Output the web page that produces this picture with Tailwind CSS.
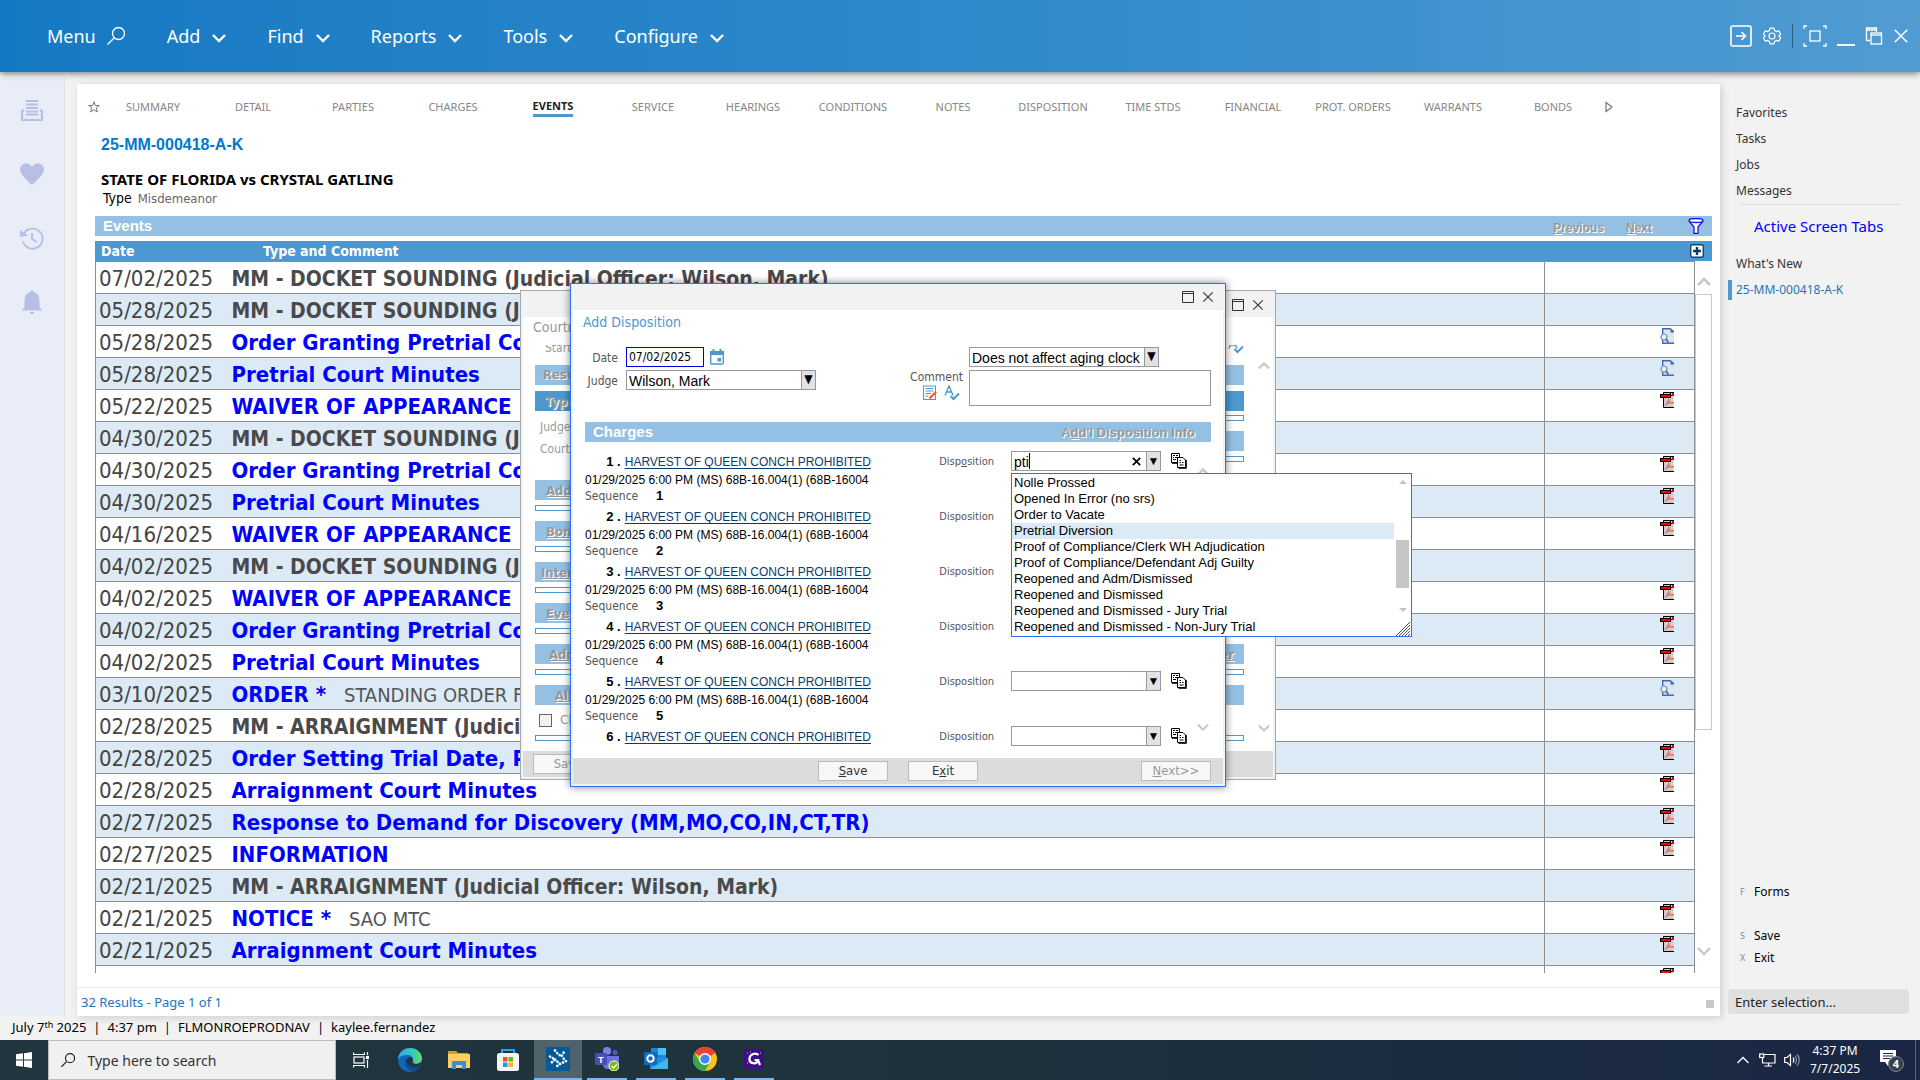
<!DOCTYPE html>
<html lang="en">
<head>
    <meta charset="UTF-8">
    <meta name="viewport" content="width=device-width, initial-scale=1.0">
    <title>25-MM-000418-A-K | Events</title>
    <script src="https://cdn.jsdelivr.net/npm/@tailwindcss/browser@4"></script>
</head>
<body class="h-screen overflow-hidden flex flex-col bg-[#f2f2f2] font-['Noto_Sans',sans-serif] text-black">

    <!-- Shared icons -->
    <svg class="hidden" aria-hidden="true">
        <symbol id="i-chev" viewBox="0 0 14 10"><path d="M1 2 L7 8 L13 2" fill="none" stroke="currentColor" stroke-width="2.4"/></symbol>
        <symbol id="i-chev-up" viewBox="0 0 14 10"><path d="M1 8 L7 2 L13 8" fill="none" stroke="currentColor" stroke-width="2.6"/></symbol>
        <symbol id="i-close" viewBox="0 0 14 14"><path d="M1.500 1.500 L12.500 12.500 M12.500 1.500 L1.500 12.500" fill="none" stroke="currentColor" stroke-width="1.300"/></symbol>
        <symbol id="i-max" viewBox="0 0 12 12"><path d="M.5 .5 H11.500 V11.500 H.5 Z M.5 2.500 H11.500" fill="none" stroke="currentColor"/></symbol>
        <symbol id="i-pdf" viewBox="0 0 14 16">
            <path d="M3.500 .5 H13.500 V15.500 H3.500 Z" fill="#ccc"/>
            <path d="M14 15.500 H3.500 V.5 H14 M10.500 1 V3.500 H14" fill="none" stroke="#000"/>
            <rect x="12" y="1" width="2" height="3" fill="#e00"/>
            <rect x=".5" y="2.500" width="10" height="3" fill="#f00" stroke="#000"/>
            <path d="M5 13.500 C7 12 9 8 8.500 6.500 M8.500 8 C9 10 11 11.500 14 11 M6 12.500 C8 11 11 10.300 14 10.800" fill="none" stroke="#f76b60" stroke-width="1.200"/>
        </symbol>
        <symbol id="i-doc" viewBox="0 0 14 16">
            <path d="M3 1 H11 L14 4 V15 H3 Z" fill="#dfe4f2"/>
            <path d="M2.700 6 V.7 H11 M5 15.300 H14 M2.700 12 V15.300 H5" fill="none" stroke="#3f6ca8" stroke-width="1.400"/>
            <path d="M10.500 0 L14 3 V4.500 H10.500 Z" fill="#3f6ca8"/>
            <circle cx="4" cy="9" r="3" fill="#e6f0f7" stroke="#6d8fae" stroke-width="1.200"/>
            <path d="M6 11.300 L8.500 14.500" stroke="#3f6ca8" stroke-width="1.800"/>
        </symbol>
        <symbol id="i-copy" viewBox="0 0 16 16">
            <path d="M.5 .5 H8.500 V9.500 H.5 Z" fill="#fff" stroke="#000"/>
            <path d="M2 2.500 H4 M5 2.500 H7 M2 4.500 H3 M4 4.500 H7 M2 6.500 H5" stroke="#000"/>
            <path d="M6.500 4.500 H12 L14.500 7 V14.500 H6.500 Z" fill="#fff" stroke="#000"/>
            <path d="M8.500 7.500 H10 M11 9.500 H12.500 M8.500 9.500 H10 M8.500 12 H12.500" fill="none" stroke="#000"/>
            <path d="M15.500 7 V15.500 H7.500 M1 10.500 H6" fill="none" stroke="#333"/>
        </symbol>
        <symbol id="i-spell" viewBox="0 0 16 16">
            <path d="M1 10.500 L5 .8 L9 10.500 M2.500 7 H7.500" fill="none" stroke="#4d99cf" stroke-width="1.400"/>
            <path d="M6.500 11 L9.500 14 L15 8.500" fill="none" stroke="#4d99cf" stroke-width="2"/>
        </symbol>
    </svg>

    <!-- Top menu -->
    <header class="relative z-10 h-[72px] shrink-0 flex items-center justify-between pl-[47px] pr-[11px] bg-linear-to-r from-[#1479c4] via-[#2f89ca] to-[#509bd2] text-white shadow-[0_2px_6px_rgba(0,0,0,0.45)]">
        <nav class="flex items-center gap-[41px] text-[18px] leading-6">
            <button class="flex items-center gap-2.5">Menu
                <svg class="size-5" viewBox="0 0 20 20" fill="none" stroke="currentColor" stroke-width="1.300"><circle cx="12.500" cy="7.500" r="6"/><path d="M8.300 11.800 L1.500 18.500"/></svg>
            </button>
            <button class="flex items-center gap-3">Add <svg class="w-3.5 h-2.5 mt-1"><use href="#i-chev"/></svg></button>
            <button class="flex items-center gap-3">Find <svg class="w-3.5 h-2.5 mt-1"><use href="#i-chev"/></svg></button>
            <button class="flex items-center gap-3">Reports <svg class="w-3.5 h-2.5 mt-1"><use href="#i-chev"/></svg></button>
            <button class="flex items-center gap-3">Tools <svg class="w-3.5 h-2.5 mt-1"><use href="#i-chev"/></svg></button>
            <button class="flex items-center gap-3">Configure <svg class="w-3.5 h-2.5 mt-1"><use href="#i-chev"/></svg></button>
        </nav>
        <div class="flex items-center gap-2.5">
            <button aria-label="Open"><svg class="size-[22px]" viewBox="0 0 22 22" fill="none" stroke="currentColor" stroke-width="1.600"><rect x="1" y="1" width="20" height="20" rx="1.500"/><path d="M6 11 H15 M11.500 7 L15.500 11 L11.500 15"/></svg></button>
            <button aria-label="Settings"><svg class="size-5" viewBox="0 0 24 24" fill="none" stroke="currentColor" stroke-width="1.400" stroke-linejoin="round"><path d="M9.700 2.500 h4.600 l.8 3 2 1.200 3-.9 2.300 4 -2.200 2.200 v0 l2.200 2.200 -2.300 4 -3-.9 -2 1.200 -.8 3 H9.700 l-.8-3 -2-1.200 -3 .9 -2.300-4 2.200-2.200 -2.200-2.200 2.300-4 3 .9 2-1.200 z"/><circle cx="12" cy="12" r="3.600"/></svg></button>
            <span class="w-px h-6 bg-[#2a5f8c]"></span>
            <button aria-label="Full screen"><svg class="size-6" viewBox="0 0 24 24" fill="none" stroke="currentColor" stroke-width="1.300"><rect x="7" y="7" width="10" height="10"/><path d="M1 5 V2 H4 M20 2 H23 V5 M23 19 V22 H20 M4 22 H1 V19"/></svg></button>
            <button aria-label="Minimize" class="h-5 w-[18px] flex items-end"><span class="block w-full h-0.5 bg-white"></span></button>
            <button aria-label="Restore"><svg class="size-[18px]" viewBox="0 0 18 18" fill="none" stroke="currentColor" stroke-width="1.300"><path d="M5 13.500 H1.500 V1 H11.500 V5 M1.500 3 H11.500"/><rect x="6" y="6" width="10.500" height="11"/><path d="M6 8 H16"/></svg></button>
            <button aria-label="Close"><svg class="size-4"><use href="#i-close"/></svg></button>
        </div>
    </header>

    <div class="flex-1 min-h-0 flex">

        <!-- Left rail -->
        <aside class="w-[65px] shrink-0 mt-1.5 pt-5 flex flex-col items-center gap-10 bg-[#e9edf8] border-r border-[#dcdfe4] text-[#b7bfe6]">
            <button aria-label="Print"><svg class="size-6" viewBox="0 0 24 24" fill="none" stroke="currentColor"><path d="M6 3 H18 M6 6.500 H18 M6 10 H18 M6 13.500 H18 M6 16.500 H18" stroke-width="1.800"/><path d="M4.500 12.500 H2 V22 H22 V12.500 H19.500" stroke-width="2.200" stroke-linejoin="round"/></svg></button>
            <button aria-label="Favorites"><svg class="size-6" viewBox="0 0 24 24" fill="currentColor"><path d="M12 23 C8 19 0 13 0 7.500 C0 3.500 3 1.500 6 1.500 C9 1.500 11 3 12 5 C13 3 15 1.500 18 1.500 C21 1.500 24 3.500 24 7.500 C24 13 16 19 12 23 Z"/></svg></button>
            <button aria-label="History"><svg class="size-6" viewBox="0 0 24 24" fill="none" stroke="currentColor" stroke-width="1.900"><path d="M3.500 8.500 A10 10 0 1 1 3 15.500"/><path d="M0 4 L0 11 L8 9.500 Z" fill="currentColor" stroke="none"/><path d="M12 7 V13 L16.500 16"/></svg></button>
            <button aria-label="Notifications"><svg class="size-6" viewBox="0 0 24 24" fill="currentColor"><path d="M12 0 C13 0 13.500 1 13.500 2 C18 3 19.500 6.500 19.500 11 V17 L22.500 20.500 H1.500 L4.500 17 V11 C4.500 6.500 6 3 10.500 2 C10.500 1 11 0 12 0 Z M10 22 H14 C14 24.500 10 24.500 10 22 Z"/></svg></button>
        </aside>

        <!-- Case card -->
        <main class="flex-1 min-w-0 mt-3 ml-3 flex flex-col bg-white shadow-[2px_2px_8px_rgba(0,0,0,0.15)]">
            <nav id="tabs" class="h-[46px] shrink-0 pl-2 flex items-center text-[11px] leading-4 text-[#868686]"></nav>

            <div class="pl-6 h-[86px] shrink-0 pt-[5px]">
                <h1 class="font-['Liberation_Sans',sans-serif] font-bold text-[16px] leading-5 text-[#0078d0]">25-MM-000418-A-K</h1>
                <p class="mt-3.5 font-bold text-[15px] leading-5">STATE OF FLORIDA vs CRYSTAL GATLING</p>
                <p class="pl-0.5 text-[14px] leading-[18px] font-['DejaVu_Sans_Condensed','DejaVu_Sans',sans-serif]">Type <span class="ml-0.5 text-[13px] text-[#666]">Misdemeanor</span></p>
            </div>

            <section class="flex-1 min-h-0 mx-2 ml-[18px] flex flex-col">
                <div class="h-5 shrink-0 px-2 flex items-center bg-[#94c0e3] font-['Liberation_Sans',sans-serif] font-bold">
                    <h2 class="flex-1 text-[15px] leading-5 text-white">Events</h2>
                    <button disabled class="pt-1 text-[12px] leading-4 text-[#999] [text-shadow:1px_1px_0_#fff] mr-[22px]"><u>P</u>revious</button>
                    <button disabled class="pt-1 text-[12px] leading-4 text-[#999] [text-shadow:1px_1px_0_#fff] mr-9"><u>N</u>ext</button>
                    <button aria-label="Filter"><svg class="size-4" viewBox="0 0 16 16" fill="#fff" stroke="#1414e0" stroke-width="1.300"><path d="M1 3 L6 9 V15.300 H10 V9 L15 3"/><ellipse cx="8" cy="2.500" rx="7" ry="2"/></svg></button>
                </div>
                <div class="mt-[5px] h-5 shrink-0 pl-1.5 pr-2 flex items-center bg-[#4d99cf] text-white font-bold text-[14px] leading-5 font-['DejaVu_Sans_Condensed','DejaVu_Sans',sans-serif]">
                    <span class="w-[162px]">Date</span>
                    <span class="flex-1">Type and Comment</span>
                    <button aria-label="Add event"><svg class="size-3.5" viewBox="0 0 14 14"><rect x=".7" y=".7" width="12.600" height="12.600" rx="2" fill="#fff" stroke="#10456f" stroke-width="1.400"/><path d="M7 3 V11 M3 7 H11" stroke="#0b3c66" stroke-width="2.400"/></svg></button>
                </div>
                <div class="flex-1 min-h-0 mb-3.5 flex overflow-hidden">
                    <div class="flex-1 min-w-0 overflow-hidden">
                        <table class="w-full table-fixed border-collapse font-['DejaVu_Sans_Condensed','DejaVu_Sans',sans-serif]">
                            <colgroup><col class="w-[132px]"><col><col class="w-[150px]"></colgroup>
                            <tbody id="events"></tbody>
                        </table>
                    </div>
                    <div class="w-[17px] shrink-0 flex flex-col items-center text-[#c8c8c8]">
                        <svg class="w-3.5 h-2.5 mt-4 mb-[7px]"><use href="#i-chev-up"/></svg>
                        <div class="w-full h-[436px] border border-[#c8c8c8]"></div>
                        <svg class="w-3.5 h-2.5 mt-auto mb-[17px]"><use href="#i-chev"/></svg>
                    </div>
                </div>
            </section>

            <footer class="h-[29px] shrink-0 pl-1 pr-1.5 flex items-center justify-between border-t border-[#ececec] text-[13px] leading-5 text-[#1e73be]">
                <span>32 Results - Page 1 of 1</span>
                <span class="size-2 mt-1 bg-[#c8c8c8]"></span>
            </footer>
        </main>

        <!-- Right panel -->
        <aside class="w-[200px] shrink-0 pt-[31px] pl-4 pr-[11px] flex flex-col text-[12px] text-[#333]">
            <a href="#" class="leading-5 mb-1.5">Favorites</a>
            <a href="#" class="leading-5 mb-1.5">Tasks</a>
            <a href="#" class="leading-5 mb-1.5">Jobs</a>
            <a href="#" class="leading-5">Messages</a>
            <hr class="mt-[3px] ml-1 mr-2 border-[#dcdcdc]">
            <a href="#" class="mt-[11px] pl-[18px] text-[15px] leading-5 text-[#0000ff]">Active Screen Tabs</a>
            <a href="#" class="mt-[18px] leading-5">What's New</a>
            <a href="#" class="mt-1.5 -ml-2 pl-1 border-l-4 border-[#4d99cf] leading-5 text-[#1e73be]">25-MM-000418-A-K</a>
            <div class="mt-auto grid grid-cols-[14px_1fr] leading-[22px] items-center pl-1 text-black">
                <span class="text-[9px] text-[#888]">F</span><a href="#">Forms</a>
                <span class="col-span-2 h-[22px]"></span>
                <span class="text-[9px] text-[#888]">S</span><a href="#">Save</a>
                <span class="text-[9px] text-[#888]">X</span><a href="#">Exit</a>
            </div>
            <input type="text" aria-label="Enter selection" placeholder="Enter selection..." class="mt-5 mb-0.5 -ml-2 h-[25px] px-[7px] rounded bg-[#e0e0e0] text-[13px] placeholder:text-[#222]">
        </aside>
    </div>

    <div class="h-6 shrink-0 pl-3 pb-0.5 flex items-center gap-[7px] text-[13px] leading-5">
        <span>July 7<sup class="text-[9px]">th</sup> 2025</span><span>|</span><span>4:37 pm</span><span>|</span><span>FLMONROEPRODNAV</span><span>|</span><span>kaylee.fernandez</span>
    </div>

    <!-- Taskbar -->
    <footer class="h-10 shrink-0 flex bg-linear-to-r from-[#22363f] via-[#1e323c] to-[#1a2644] text-white">
        <button aria-label="Start" class="w-12 flex items-center justify-center"><svg class="size-4" viewBox="0 0 16 16" fill="#fff"><path d="M0 2.300 L7 1.300 V7.500 H0 Z M8 1.200 L16 0 V7.500 H8 Z M0 8.500 H7 V14.700 L0 13.700 Z M8 8.500 H16 V16 L8 14.800 Z"/></svg></button>
        <label class="w-72 flex items-center gap-3 pl-3 bg-[#f0f0f0] border border-[#bbb]">
            <svg class="size-4" viewBox="0 0 16 16" fill="none" stroke="#222" stroke-width="1.300"><circle cx="10" cy="6" r="5"/><path d="M6.400 9.600 L.5 15.500"/></svg>
            <input type="text" aria-label="Search" placeholder="Type here to search" class="w-full text-[14px] text-black placeholder:text-[#333]">
        </label>
        <button aria-label="Task View" class="w-[49px] flex items-center justify-center"><svg class="size-4" viewBox="0 0 16 16" fill="none" stroke="#fff" stroke-width="1.200"><rect x="1" y="5" width="10" height="6"/><path d="M.6 .5 V2.500 H11.400 V.5 M.6 15.500 V13.500 H11.400 V15.500 M14.500 0 V3 M14.500 8 V16"/><rect x="13.500" y="4.500" width="2" height="2" fill="#fff"/></svg></button>
        <button aria-label="Edge" class="w-[49px] flex items-center justify-center"><svg class="size-6" viewBox="0 0 24 24">
            <defs><linearGradient id="edge" x1="0" x2="1"><stop offset="0" stop-color="#2fa9e8"/><stop offset=".6" stop-color="#35c5c0"/><stop offset="1" stop-color="#66dd58"/></linearGradient></defs>
            <circle cx="12" cy="12" r="12" fill="#1467b8"/><path d="M0 11 C1 3 7 0 12 0 C19 0 24 5 24 10.500 C24 14 21 16 17.500 16 C15 16 14 15 14.500 14 C16 11.500 15 7.500 10 7 C5 6.500 1.500 8.500 0 11 Z" fill="url(#edge)"/>
            <path d="M8.500 10 C5 14 8 22 14 23.500 C18 23.500 21 21 22 18.500 C16 21 9.500 17 8.500 10 Z" fill="#0d4a8f"/><path d="M14.500 14 C15.500 11.500 14.500 9.500 12.500 9 C9 9 8.300 12 9 14 C11 19 18 20.500 22.500 17.800 L23.500 14 C21 16 16 17 14.500 14 Z" fill="#22363f"/></svg></button>
        <button aria-label="File Explorer" class="w-[49px] flex items-center justify-center"><svg class="w-[22px] h-[18px]" viewBox="0 0 22 18"><path d="M0 0 H8 L10 2 H20 V6 H0 Z" fill="#d99b1c"/><rect y="3" width="22" height="14" fill="#fccf5e"/><path d="M4 18 V10 H18 V18 H14 V14 H8 V18 Z" fill="#3f8ed0"/></svg></button>
        <button aria-label="Store" class="w-[49px] flex items-center justify-center"><svg class="size-6" viewBox="0 0 24 24"><path d="M6 7 V2 H18 V7" fill="none" stroke="#24a7ee" stroke-width="2"/><rect x="1" y="5" width="22" height="18" rx="2.500" fill="#f4f4f4"/><rect x="7" y="9" width="4.500" height="4.500" fill="#e8502a"/><rect x="12.500" y="9" width="4.500" height="4.500" fill="#6bb61a"/><rect x="7" y="14.500" width="4.500" height="4.500" fill="#12a0ea"/><rect x="12.500" y="14.500" width="4.500" height="4.500" fill="#fdb60b"/></svg></button>
        <button aria-label="Case Manager" class="w-12 ml-0.5 flex items-center justify-center bg-[#50636b] border-b-2 border-[#76b9ed]"><svg class="size-6" viewBox="0 0 24 24"><rect width="24" height="24" fill="#045a98"/><g stroke="#fff" stroke-width="2.600" stroke-linecap="round" stroke-dasharray=".1 3.200" fill="none"><path d="M9 3.500 L12 7 L15.500 9.500 L18 5"/><path d="M4 9.500 L9 12.500 L5 16"/><path d="M9 12.500 L14 17 L9 20.500"/><path d="M14 17 L20 14 L15.500 9.500"/></g></svg></button>
        <button aria-label="Teams" class="w-10 ml-[5px] flex items-center justify-center border-b-2 border-[#76b9ed]"><svg class="size-6" viewBox="0 0 24 24"><circle cx="12" cy="4" r="4" fill="#7b83eb"/><circle cx="20" cy="5.500" r="2.500" fill="#5059c9"/><path d="M9 9 H24 V17 C24 20 21 22 18 22 H12 C9 22 8 19 8 17 Z" fill="#6b74dc"/><rect y="6" width="12" height="12" rx="1" fill="#464eb8"/><text x="6" y="15.500" font-size="9.500" font-weight="700" text-anchor="middle" fill="#fff" font-family="Liberation Sans">T</text><circle cx="19" cy="19" r="5" fill="#7fba00" stroke="#fff"/><path d="M16.500 19 L18.500 21 L21.800 17.500" fill="none" stroke="#fff" stroke-width="1.400"/></svg></button>
        <button aria-label="Outlook" class="w-10 ml-[9px] flex items-center justify-center border-b-2 border-[#76b9ed]"><svg class="size-6" viewBox="0 0 24 24"><rect x="7" y="1" width="15" height="13" fill="#1a86d9"/><path d="M14 1 H22 V8 H14 Z" fill="#4cc2f7"/><path d="M7 8 H14 V14 H7 Z" fill="#0f5ca8"/><path d="M6 10 L24 11 V22 H6 Z" fill="#1f8ee0"/><path d="M6 22 L24 11 V22 Z" fill="#46b4f0"/><rect y="5" width="13" height="13" rx="1" fill="#0f6cbd"/><circle cx="6.500" cy="11.500" r="3.200" fill="none" stroke="#fff" stroke-width="2"/></svg></button>
        <button aria-label="Chrome" class="w-10 ml-[9px] flex items-center justify-center border-b-2 border-[#76b9ed]"><svg class="size-6" viewBox="0 0 24 24"><circle cx="12" cy="12" r="12" fill="#fbc116"/><path d="M12 12 L1.600 6 A12 12 0 0 1 22.400 6 Z" fill="#ea4335"/><path d="M1.600 6 A12 12 0 0 0 12 24 L17.200 15 L12 12 L6.800 15 Z" fill="#34a853"/><circle cx="12" cy="12" r="6" fill="#fff"/><circle cx="12" cy="12" r="4.600" fill="#4285f4"/></svg></button>
        <button aria-label="Grackle" class="w-10 ml-[9px] flex items-center justify-center border-b-2 border-[#76b9ed]"><svg class="size-5" viewBox="0 0 20 20"><rect width="20" height="20" rx="3" fill="#3c0f86"/><path d="M14.500 6 C12 3.500 6 4.500 5.500 9.500 C5 15 13 16 14 11 H10.500 M14 11 L16 16" fill="none" stroke="#fff" stroke-width="2.200"/><path d="M3 4 h1 M16 4 h1 M3 14 h1 M6 3 h1" stroke="#d9c8ff"/></svg></button>
        <div class="ml-auto flex items-center">
            <svg class="w-3 h-2" viewBox="0 0 12 8" fill="none" stroke="#fff" stroke-width="1.300"><path d="M.5 7 L6 1.500 L11.500 7"/></svg>
            <svg class="w-[17px] h-3.5 ml-2.5" viewBox="0 0 17 14" fill="none" stroke="#fff" stroke-width="1.200"><path d="M5 1.500 H16 V10 H3.500 V5 M9.500 10 V13 M5.500 13 H13"/><rect x=".7" y="1" width="4" height="3.500"/></svg>
            <svg class="size-4 ml-2" viewBox="0 0 16 16" fill="none" stroke="#fff" stroke-width="1.200"><path d="M.7 5.500 H3 L6.500 2.500 V13.500 L3 10.500 H.7 Z"/><path d="M9 5.500 C10 7 10 9 9 10.500"/><path d="M11 4 C13 6 13 10 11 12 M13 2.500 C16 5 16 11 13 13.500" stroke="#8a93a3"/></svg>
            <div class="ml-2.5 w-[50px] text-center text-[12px] leading-[18px]">4:37 PM<br>7/7/2025</div>
            <span class="relative ml-5 w-6 h-5">
                <svg class="w-4 h-4" viewBox="0 0 16 16"><path d="M0 0 H16 V12 H12 L8 16 L5 12 H0 Z" fill="#fff"/><path d="M3 3.500 H13 M3 6 H13 M3 8.500 H10" stroke="#1a2644"/></svg>
                <span class="absolute left-2 top-1.5 size-4 rounded-full bg-[#34404c] border border-[#7c8490] text-[11px] font-bold leading-[14px] text-center">4</span>
            </span>
            <span class="ml-[11px] mr-1 w-px h-10 bg-[#5a6478]"></span>
        </div>
    </footer>

    <!-- Court event window behind the dialog -->
    <div class="absolute z-20 left-[520px] top-[290px] w-[756px] p-0.5 bg-[#f2f2f2] border border-[#a8a8a8] text-[13px] text-[#999] font-['DejaVu_Sans_Condensed','DejaVu_Sans',sans-serif]">
        <div class="h-6 pr-[9px] flex items-center justify-end gap-2 text-[#333]">
            <svg class="size-3"><use href="#i-max"/></svg><svg class="size-3"><use href="#i-close"/></svg>
        </div>
        <div class="relative bg-white pl-3 pr-[29px] h-[434px] overflow-hidden">
            <h2 class="-ml-0.5 text-[14px] leading-5">Courtroom Minutes</h2>
            <div class="h-[9px] ml-2.5 mt-2 flex items-end justify-between overflow-hidden text-[12px] leading-3"><span>Start</span><svg class="size-4"><use href="#i-spell"/></svg></div>
            <div class="mt-[11px] h-5 pl-2 bg-[#94c0e3] font-bold leading-5 [text-shadow:1px_1px_0_#fff]">Result</div>
            <div class="mt-1.5 h-5 pl-2.5 bg-[#4d99cf] font-bold leading-[22px] [text-shadow:1px_1px_0_#fff]">Type</div>
            <div class="h-[69px] flex">
                <div class="flex-1 pl-[5px] pt-[5px] text-[12px] leading-[22px]">Judge<br>Court</div>
                <div class="flex-1">
                    <div class="mt-1 h-1.5 border border-[#4d99cf] bg-white"></div>
                    <div class="mt-2.5 h-5 bg-[#94c0e3]"></div>
                    <div class="mt-[5px] h-1.5 border border-[#4d99cf] bg-white"></div>
                </div>
            </div>
            <div id="back-sections" class="font-bold [text-shadow:1px_1px_0_#fff]"></div>
            <div class="-mt-[5px] pl-1 h-5 flex items-center"><input type="checkbox" disabled id="clr" class="appearance-none size-[13px] border border-[#666] bg-[#f2f2f2]"><label for="clr" class="ml-2">Clear</label></div>
            <div class="mt-[5px] h-1.5 border border-[#4d99cf]"></div>
            <svg class="absolute right-[3px] top-11 w-3 h-2.5 text-[#c8c8c8]"><use href="#i-chev-up"/></svg>
            <svg class="absolute right-[3px] bottom-[18px] w-3 h-2.5 text-[#c8c8c8]"><use href="#i-chev"/></svg>
        </div>
        <div class="h-[26px] px-2.5 flex items-center justify-between bg-[#dcdcdc]">
            <button disabled class="w-[70px] h-5 bg-[#f7f7f7] border border-[#bbb] leading-4">Save</button>
        </div>
    </div>

    <!-- Add Disposition dialog -->
    <div role="dialog" aria-label="Add Disposition" class="absolute z-30 left-[570px] top-[283px] w-[656px] p-0.5 pt-0 bg-[#f2f2f2] border border-[#2b73f0] shadow-[0_0_8px_rgba(0,0,0,0.5)] font-['DejaVu_Sans_Condensed','DejaVu_Sans',sans-serif] text-[12px] text-[#555]">
        <div class="h-[26px] pr-[9px] flex items-center justify-end gap-2 text-[#333]">
            <button aria-label="Maximize"><svg class="size-3"><use href="#i-max"/></svg></button>
            <button aria-label="Close"><svg class="size-3"><use href="#i-close"/></svg></button>
        </div>
        <div class="relative h-[448px] bg-white pl-3 pr-3">
            <h2 class="-ml-0.5 h-[37px] pt-0.5 text-[14px] leading-5 text-[#4d99cf]">Add Disposition</h2>
            <div class="flex justify-between">
                <div class="grid grid-cols-[33px_auto] gap-x-2 gap-y-[3px] content-start items-center">
                    <label for="date" class="pt-0.5 text-right">Date</label>
                    <div class="flex items-center gap-1.5">
                        <input id="date" type="text" value="07/02/2025" class="w-[78px] h-5 pl-0.5 border border-[#0000e0] text-[12px] text-black">
                        <button aria-label="Calendar"><svg class="w-3.5 h-4" viewBox="0 0 14 16"><rect x=".7" y="3" width="12.600" height="12" rx="1" fill="#fff" stroke="#4d99cf" stroke-width="1.400"/><path d="M0 2 H14 V6 H0 Z M2.500 0 H4.500 V3 H2.500 Z M9.500 0 H11.500 V3 H9.500 Z M7.500 9 H11 V12.500 H7.500 Z" fill="#4d99cf"/></svg></button>
                    </div>
                    <label for="judge" class="pt-0.5 text-right">Judge</label>
                    <div class="relative w-[190px] h-5">
                        <select id="judge" class="appearance-none w-full h-5 pt-0.5 pl-0.5 border border-[#999] bg-white text-black text-[14px] leading-4 font-['Liberation_Sans',sans-serif]"><option>Wilson, Mark</option></select>
                        <span class="absolute right-0 top-0 w-[15px] h-5 border border-[#999] bg-[#e1e1e6] text-black text-[12px] leading-4 text-center pointer-events-none">▼</span>
                    </div>
                </div>
                <div class="grid grid-cols-[auto_242px] gap-x-1.5 gap-y-[3px]">
                    <div class="relative col-start-2 w-[190px] h-5">
                        <select aria-label="Aging clock" class="appearance-none w-full h-5 pt-0.5 pl-0.5 border border-[#999] bg-white text-black text-[14px] leading-4 font-['Liberation_Sans',sans-serif]"><option>Does not affect aging clock</option></select>
                        <span class="absolute right-0 top-0 w-[15px] h-5 border border-[#999] bg-[#e1e1e6] text-black text-[12px] leading-4 text-center pointer-events-none">▼</span>
                    </div>
                    <div>
                        <label for="comment" class="block leading-[14px]">Comment</label>
                        <div class="flex justify-end gap-1.5 mr-[3px] mt-px">
                            <svg class="size-4" viewBox="0 0 16 16"><rect x="1.500" y="1" width="12" height="13.500" fill="#fff" stroke="#4d99cf"/><path d="M3.500 3.500 H11.500 M3.500 6 H11.500 M3.500 8.500 H9 M3.500 11 H6.500" stroke="#4d99cf"/><path d="M7.500 13.500 L14 7" stroke="#e8692c" stroke-width="2.400"/></svg>
                            <svg class="size-4"><use href="#i-spell"/></svg>
                        </div>
                    </div>
                    <textarea id="comment" class="block w-full h-9 border border-[#999] resize-none"></textarea>
                </div>
            </div>
            <div class="mt-4 h-5 px-2 flex items-center justify-between bg-[#94c0e3] font-['Liberation_Sans',sans-serif] font-bold">
                <h3 class="text-[15px] leading-5 text-white">Charges</h3>
                <button disabled class="mr-2 pt-0.5 text-[13px] leading-4 text-[#999] [text-shadow:1px_1px_0_#fff]">A<u>d</u>d'l Disposition Info</button>
            </div>
            <div id="charges" class="pt-[9px]"></div>
            <svg class="absolute right-3.5 top-[157px] w-3 h-2.5 text-[#c8c8c8]"><use href="#i-chev-up"/></svg>
            <svg class="absolute right-3.5 bottom-[26px] w-3 h-2.5 text-[#c8c8c8]"><use href="#i-chev"/></svg>
        </div>
        <div class="h-[26px] px-3 grid grid-cols-[1fr_auto_1fr] items-center bg-[#dcdcdc] text-[13px] leading-[18px] text-[#333]">
            <span></span>
            <div class="flex gap-5">
                <button class="w-[70px] h-5 bg-[#f7f7f7] border border-[#bbb]"><u>S</u>ave</button>
                <button class="w-[70px] h-5 bg-[#f7f7f7] border border-[#bbb]">E<u>x</u>it</button>
            </div>
            <button disabled class="w-[70px] h-5 justify-self-end bg-[#f7f7f7] border border-[#bbb] text-[#999]"><u>N</u>ext&gt;&gt;</button>
        </div>
    </div>

    <script>
        // --- Tabs ---
        const tabs = ['SUMMARY', 'DETAIL', 'PARTIES', 'CHARGES', 'EVENTS', 'SERVICE', 'HEARINGS', 'CONDITIONS', 'NOTES', 'DISPOSITION', 'TIME STDS', 'FINANCIAL', 'PROT. ORDERS', 'WARRANTS', 'BONDS'];
        document.getElementById('tabs').innerHTML = `
            <button aria-label="Favorite" class="w-[18px] flex justify-center"><svg class="size-3" viewBox="0 0 12 12" fill="none" stroke="#777"><path d="M6 .8 L7.300 4.500 H11.300 L8.200 7 L9.300 11 L6 8.700 L2.700 11 L3.800 7 L.7 4.500 H4.700 Z"/></svg></button>
            ${tabs.map(t => `<a href="#" class="w-[100px] text-center">${t === 'EVENTS' ? '<span class="inline-block h-[19px] font-bold text-[#222] border-b-3 border-[#4d99cf]">EVENTS</span>' : t}</a>`).join('')}
            <button aria-label="More tabs"><svg class="w-2 h-3 ml-0.5" viewBox="0 0 8 12" fill="none" stroke="#777" stroke-width="1.200"><path d="M1 1.500 L7 6 L1 10.500 Z"/></svg></button>`;

        // --- Docket rows: date, title, blue link?, icon, comment ---
        const sounding = 'MM - DOCKET SOUNDING (Judicial Officer: Wilson, Mark)';
        const arraignment = 'MM - ARRAIGNMENT (Judicial Officer: Wilson, Mark)';
        const rows = [
            ['07/02/2025', sounding, false, ''],
            ['05/28/2025', sounding, false, ''],
            ['05/28/2025', 'Order Granting Pretrial Conference', true, 'doc'],
            ['05/28/2025', 'Pretrial Court Minutes', true, 'doc'],
            ['05/22/2025', 'WAIVER OF APPEARANCE', true, 'pdf'],
            ['04/30/2025', sounding, false, ''],
            ['04/30/2025', 'Order Granting Pretrial Conference', true, 'pdf'],
            ['04/30/2025', 'Pretrial Court Minutes', true, 'pdf'],
            ['04/16/2025', 'WAIVER OF APPEARANCE', true, 'pdf'],
            ['04/02/2025', sounding, false, ''],
            ['04/02/2025', 'WAIVER OF APPEARANCE', true, 'pdf'],
            ['04/02/2025', 'Order Granting Pretrial Conference', true, 'pdf'],
            ['04/02/2025', 'Pretrial Court Minutes', true, 'pdf'],
            ['03/10/2025', 'ORDER *', true, 'doc', 'STANDING ORDER FOR DISCOVERY'],
            ['02/28/2025', arraignment, false, ''],
            ['02/28/2025', 'Order Setting Trial Date, Pretrial', true, 'pdf'],
            ['02/28/2025', 'Arraignment Court Minutes', true, 'pdf'],
            ['02/27/2025', 'Response to Demand for Discovery (MM,MO,CO,IN,CT,TR)', true, 'pdf'],
            ['02/27/2025', 'INFORMATION', true, 'pdf'],
            ['02/21/2025', arraignment, false, ''],
            ['02/21/2025', 'NOTICE *', true, 'pdf', 'SAO MTC'],
            ['02/21/2025', 'Arraignment Court Minutes', true, 'pdf'],
            ['', '', false, 'pdf']
        ];
        const icons = {
            '': '',
            doc: '<svg class="w-3.5 h-4 mr-5 -mt-3 ml-auto"><use href="#i-doc"/></svg>',
            pdf: '<svg class="w-3.5 h-4 mr-5 -mt-3 ml-auto"><use href="#i-pdf"/></svg>'
        };
        document.getElementById('events').innerHTML = rows.map(([date, title, link, icon, note]) => `
            <tr class="h-8 border border-[#8f8f8f] even:bg-[#dceaf6] text-[22px] leading-7 whitespace-nowrap">
                <td class="pt-0.5 pl-[3px] text-[#444]">${date}</td>
                <td class="pt-0.5 pl-1 overflow-hidden">${link
                    ? `<a href="#" class="font-bold text-[#0000ff]">${title}</a>`
                    : `<span class="font-bold text-[21px] text-[#4a4a4a]">${title}</span>`}${note ? `<span class="ml-[18px] text-[20px] text-[#555]">${note}</span>` : ''}</td>
                <td class="border-l border-[#8f8f8f]">${icons[icon]}</td>
            </tr>`).join('');

        // --- Disabled sections in the window behind ---
        const sections = [['Add Event', 'pl-[11px]'], ['Bonds', 'pl-[11px]'], ['Interpreter', 'pl-1.5'], ['Events', 'pl-[11px]'], ['Additional', 'pl-3.5'], ['All Parties', 'pl-5']];
        document.getElementById('back-sections').innerHTML = sections.map(([s, pad], i) => `
            <div class="h-5 pr-2.5 ${pad} flex justify-between bg-[#94c0e3] leading-[22px]"><u>${s}</u>${i === 4 ? '<u>Other</u>' : ''}</div>
            ${i < 5 ? '<div class="mt-[5px] mb-2.5 h-1.5 border border-[#4d99cf]"></div>' : '<div class="h-2.5"></div>'}`).join('');

        // --- Charges with the open disposition list on the first one ---
        const options = ['Nolle Prossed', 'Opened In Error (no srs)', 'Order to Vacate', 'Pretrial Diversion', 'Proof of Compliance/Clerk WH Adjudication', 'Proof of Compliance/Defendant Adj Guilty', 'Reopened and Adm/Dismissed', 'Reopened and Dismissed', 'Reopened and Dismissed - Jury Trial', 'Reopened and Dismissed - Non-Jury Trial'];
        const list = `
            <ul role="listbox" class="absolute z-10 left-0 top-[22px] w-[401px] h-[164px] pt-px pr-[17px] bg-white border border-[#2b73f0] text-[13px] leading-4 text-black">
                ${options.map(o => `<li role="option" class="pl-0.5 ${o === 'Pretrial Diversion' ? 'bg-[#dceaf6]' : ''}">${o}</li>`).join('')}
                <li role="presentation" class="absolute right-0.5 top-1.5 bottom-0 w-[13px] flex flex-col items-center">
                    <svg class="w-2 h-1" viewBox="0 0 8 4" fill="#c3c3c3"><path d="M0 4 L4 0 L8 4 Z"/></svg>
                    <span class="mt-14 w-full h-12 bg-[#c6c6c6]"></span>
                    <svg class="mt-5 w-2 h-1" viewBox="0 0 8 4" fill="#c3c3c3"><path d="M0 0 L4 4 L8 0 Z"/></svg>
                    <svg class="mt-auto w-3.5 h-3.5" viewBox="0 0 14 14" stroke="#555" stroke-width="1"><path d="M0 14 L14 0 M3 14 L14 3 M6 14 L14 6 M9 14 L14 9 M12 14 L14 12"/></svg>
                </li>
            </ul>`;
        document.getElementById('charges').innerHTML = [1, 2, 3, 4, 5, 6].map(n => `
            <div class="${n < 6 ? 'h-[55px]' : 'h-5'} grid grid-cols-[286px_123px_167px_16px] font-['Liberation_Sans',sans-serif]">
                <div class="pt-px whitespace-nowrap text-black">
                    <div class="h-5 flex leading-5">
                        <span class="w-[45px] pr-1 text-right font-bold text-[13px]">${n} .</span>
                        <a href="#" class="underline underline-offset-2 text-[12px] text-[#0a3c6e]">HARVEST OF QUEEN CONCH PROHIBITED</a>
                    </div>
                    ${n < 6 ? `<div class="leading-4">01/29/2025 6:00 PM (MS) 68B-16.004(1) (68B-16004</div>
                    <div class="leading-4 flex"><span class="w-[71px] text-[#555] font-['DejaVu_Sans_Condensed','DejaVu_Sans',sans-serif]">Sequence</span><b class="text-[13px]">${n}</b></div>` : ''}
                </div>
                <label for="disp${n}" class="text-right leading-[22px] text-[11px] font-['DejaVu_Sans_Condensed','DejaVu_Sans',sans-serif]">${n === 1 ? 'Disp<u>o</u>sition' : 'Disposition'}</label>
                <div class="relative ml-[17px] w-[150px] h-5 flex">
                    <input id="disp${n}" type="text" value="${n === 1 ? 'pti' : ''}" class="w-[136px] h-5 pt-0.5 pl-0.5 border border-[#999] bg-white text-[14px] text-black">
                    <button aria-label="Show dispositions" class="-ml-px w-[15px] h-5 border border-[#999] bg-[#e1e1e6] text-black text-[12px] leading-4">▼</button>
                    ${n === 1 ? `<span class="absolute left-[18px] top-0.5 w-px h-4 bg-black"></span>
                    <svg class="absolute left-[121px] top-1.5 size-[9px]" viewBox="0 0 9 9" stroke="#000" stroke-width="1.700"><path d="M.8 .8 L8.200 8.200 M8.200 .8 L.8 8.200"/></svg>${list}` : ''}
                </div>
                <button aria-label="Copy disposition" class="ml-2.5 mt-0.5 size-4"><svg class="size-4"><use href="#i-copy"/></svg></button>
            </div>`).join('');
    </script>
</body>
</html>
